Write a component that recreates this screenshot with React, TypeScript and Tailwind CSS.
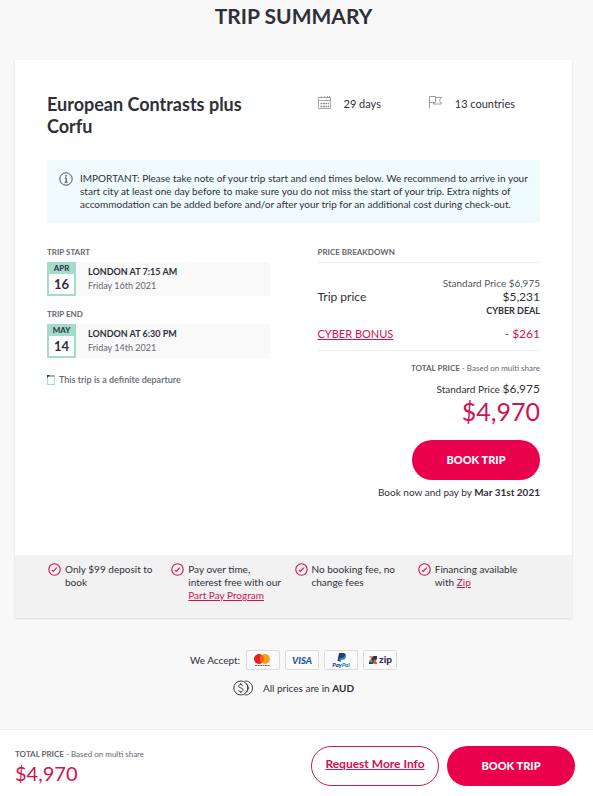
import type { ReactNode } from 'react';

function CalendarIcon() {
  return (
    <svg className="size-[14px] shrink-0 text-[#85858a]" viewBox="0 0 14 14" fill="none" stroke="currentColor" aria-hidden="true">
      <path d="M0.500 1.500h12v11h-12zM0.500 4.500h12M3.500 0v2.500M6.500 0v2M9.500 0v2M11.500 0v2.500" strokeWidth="0.7" />
      <path d="M2.500 7.500h8.500M2.500 10.500h8.500" strokeWidth="1.400" strokeDasharray="1.800 0.700" />
    </svg>
  );
}

function FlagIcon() {
  return (
    <svg className="size-[14px] shrink-0 text-[#85858a]" viewBox="0 0 14 14" fill="none" stroke="currentColor" strokeWidth="0.8" aria-hidden="true">
      <path d="M0.500 12.500V0.500h6v6h-6M6.500 1.500h6l-2 3 2 3.500H4.500V6.500" />
    </svg>
  );
}

function InfoIcon() {
  return (
    <svg className="size-[14px] shrink-0 text-[#3c3c46]" viewBox="0 0 14 14" fill="none" stroke="currentColor" aria-hidden="true">
      <circle cx="7" cy="7" r="6.200" strokeWidth="0.9" />
      <path d="M5.800 6h1.400v4M5.600 10.200h3" strokeWidth="1" />
      <circle cx="7" cy="3.900" r="0.800" fill="currentColor" stroke="none" />
    </svg>
  );
}

function TickIcon() {
  return (
    <svg className="size-[13px] shrink-0 text-[#d0124f]" viewBox="0 0 13 13" fill="none" stroke="currentColor" aria-hidden="true">
      <circle cx="6.500" cy="6.500" r="5.700" strokeWidth="1.100" />
      <path d="M4 7.200l1.200 1.200 3.600-3.800" strokeWidth="1.100" />
    </svg>
  );
}

function CoinsIcon() {
  return (
    <svg className="h-4 w-5 shrink-0 text-[#3c3c46]" viewBox="0 0 20 16" fill="none" stroke="currentColor" aria-hidden="true">
      <circle cx="7.800" cy="8" r="7" strokeWidth="1" />
      <path d="M11.500 1.300c1.200-.4 2.500-.3 3.800.3a7 7 0 0 1 0 12.800c-1.300.6-2.600.7-3.800.3M13.500 3.800c2.300 2.400 2.300 6 0 8.400" strokeWidth="1" />
      <path d="M10 5.800C9.600 4.900 8.800 4.500 7.800 4.500c-1.300 0-2.200.7-2.200 1.700 0 2.300 4.500 1.200 4.500 3.600 0 1.100-1 1.800-2.300 1.800-1.200 0-2.100-.5-2.400-1.500M7.800 3v1.500M7.800 11.600V13" strokeWidth="1" />
    </svg>
  );
}

function DepartureIcon() {
  return (
    <svg className="h-2.5 w-2 shrink-0" viewBox="0 0 8 10" fill="none" aria-hidden="true">
      <rect x="0.500" y="0.500" width="7" height="9" fill="#fff" stroke="#a5dccb" />
      <path d="M0 1h8" stroke="#85bfae" strokeWidth="2" />
      <path d="M0 0h3L0 3z" fill="#26463d" />
    </svg>
  );
}

function DateRow({ label, month, day, title, date }: { label: string; month: string; day: string; title: string; date: string }) {
  return (
    <section>
      <h3 className="text-[8px] leading-4 font-bold text-[#66666e]">{label}</h3>
      <div className="mt-0.5 flex h-[34px] bg-[#f9f9fa]">
        <div className="flex w-[29px] shrink-0 flex-col bg-[#a3dccb] px-0.5 pb-0.5 text-center font-bold text-[#2f2f38]">
          <span className="text-[8px] leading-3">{month}</span>
          <span className="flex-1 bg-white text-[13px] leading-5">{day}</span>
        </div>
        <div className="flex flex-col justify-center pl-3">
          <p className="text-[9px] leading-[14px] font-bold text-[#2f2f38]">{title}</p>
          <p className="text-[9px] leading-[14px] text-[#66666e]">{date}</p>
        </div>
      </div>
    </section>
  );
}

function Perk({ children }: { children: ReactNode }) {
  return (
    <li className="flex items-start gap-1 pr-3 pl-px">
      <TickIcon />
      <p className="text-[10px] leading-[13px]">{children}</p>
    </li>
  );
}

function Badge({ label, children }: { label: string; children: ReactNode }) {
  return (
    <li className="flex h-5 w-[34px] items-center justify-center rounded-xs border border-[#dcdce0] bg-[#fafafb]">
      <svg className="h-[18px] w-8" viewBox="0 0 32 18" role="img" aria-label={label}>
        {children}
      </svg>
    </li>
  );
}

function BookButton() {
  return (
    <button type="button" className="h-10 w-32 rounded-full bg-[#eb004e] text-[11px] font-black text-white">
      BOOK TRIP
    </button>
  );
}

export default function App() {
  return (
    <div className="flex min-h-screen flex-col bg-[#f8f8f8] font-['Lato','Open_Sans',sans-serif] text-[#2f2f38]">
      <main className="flex-1 pr-[21px] pb-8 pl-[15px]">
        <h1 className="pt-1 text-center text-[21px] leading-6 font-bold">TRIP SUMMARY</h1>

        <article className="mt-8 bg-white shadow-[0_1px_2px_rgba(0,0,0,0.12)]">
          <div className="px-8 pt-8 pb-[55px]">
            <header className="grid grid-cols-2 gap-12">
              <h2 className="pt-px text-lg leading-[22px] font-bold">European Contrasts plus Corfu</h2>
              <ul className="grid grid-cols-2 pt-1 text-[11px] leading-4">
                <li className="flex items-start gap-3">
                  <CalendarIcon />
                  <span>29 days</span>
                </li>
                <li className="flex items-start gap-3">
                  <FlagIcon />
                  <span>13 countries</span>
                </li>
              </ul>
            </header>

            <div className="mt-[23px] flex gap-[7px] bg-[#f0fbfd] py-3 pr-2 pl-3">
              <InfoIcon />
              <p className="text-[10px] leading-[13px]">
                IMPORTANT: Please take note of your trip start and end times below. We recommend to arrive in your start city at least one day before to make sure you do not miss the start of your trip. Extra nights of accommodation can be added before and/or after your trip for an additional cost during check-out.
              </p>
            </div>

            <div className="mt-[21px] grid grid-cols-2 gap-12">
              <div>
                <DateRow label="TRIP START" month="APR" day="16" title="LONDON AT 7:15 AM" date="Friday 16th 2021" />
                <div className="mt-2.5">
                  <DateRow label="TRIP END" month="MAY" day="14" title="LONDON AT 6:30 PM" date="Friday 14th 2021" />
                </div>
                <p className="mt-4 flex items-center gap-1 text-[9px] leading-3 font-semibold text-[#66666e]">
                  <DepartureIcon />
                  This trip is a definite departure
                </p>
              </div>

              <section className="text-right">
                <h3 className="border-b border-[#eeeeef] pb-0.5 text-left text-[8px] leading-4 font-bold text-[#66666e]">PRICE BREAKDOWN</h3>
                <dl className="border-b border-[#eeeeef] pt-[13px] pb-2">
                  <div className="flex items-center justify-between">
                    <dt className="text-xs">Trip price</dt>
                    <dd>
                      <p className="text-[10px] leading-[14px] text-[#55555d]">Standard Price $6,975</p>
                      <p className="text-xs leading-[14px]">$5,231</p>
                      <p className="text-[9px] leading-[14px] font-bold">CYBER DEAL</p>
                    </dd>
                  </div>
                  <div className="mt-2 flex items-center justify-between leading-4 text-[#d0124f]">
                    <dt className="text-[11px]">
                      <a href="#cyber-bonus" className="underline">CYBER BONUS</a>
                    </dt>
                    <dd className="text-xs leading-4">- $261</dd>
                  </div>
                </dl>
                <p className="mt-[11px] text-[8px] leading-3 text-[#66666e]">
                  <strong>TOTAL PRICE</strong> - Based on multi share
                </p>
                <p className="mt-[7px] text-[10px] leading-4">
                  Standard Price <span className="text-xs">$6,975</span>
                </p>
                <p className="text-[25px] leading-7 text-[#d0124f]">$4,970</p>
                <div className="mt-[15px]">
                  <BookButton />
                </div>
                <p className="mt-1 text-[10px] leading-4">
                  Book now and pay by <strong>Mar 31st 2021</strong>
                </p>
              </section>
            </div>
          </div>

          <ul className="grid grid-cols-4 bg-[#f2f2f2] px-8 pt-2 pb-4">
            <Perk>Only $99 deposit to book</Perk>
            <Perk>
              Pay over time, interest free with our{' '}
              <a href="#part-pay" className="text-[#d0124f] underline">Part Pay Program</a>
            </Perk>
            <Perk>No booking fee, no change fees</Perk>
            <Perk>
              Financing available with <a href="#zip" className="text-[#d0124f] underline">Zip</a>
            </Perk>
          </ul>
        </article>

        <div className="mt-8 flex items-center justify-center gap-1.5 text-[10px]">
          <span>We Accept:</span>
          <ul className="flex gap-[5px]">
            <Badge label="Mastercard">
              <circle cx="12" cy="8" r="5" fill="#eb1c26" />
              <circle cx="18" cy="8" r="5" fill="#f79e1b" />
              <path d="M15 4a5 5 0 0 1 0 8 5 5 0 0 1 0-8z" fill="#ff5f00" />
              <path d="M8 14.500h15" stroke="#66666e" strokeDasharray="2 0.500" />
            </Badge>
            <Badge label="Visa">
              <text x="16" y="12.500" textAnchor="middle" fontSize="9.500" fontWeight="900" fontStyle="italic" fill="#245b99">VISA</text>
            </Badge>
            <Badge label="PayPal">
              <path d="M14 2h4c2.200 0 3 1.200 2.600 2.800C20.200 6.800 18.800 7.500 17 7.500h-1.500L15 10h-2.500z" fill="#1f3f7c" />
              <path d="M20.500 4.500c1 2.500-.8 4.200-3 4.200h-1.200l-.5 2h-2l.4-2" fill="#1689c9" />
              <text x="16" y="16" textAnchor="middle" fontSize="6" fontWeight="900" fontStyle="italic" fill="#1f3f7c">
                Pay<tspan fill="#1689c9">Pal</tspan>
              </text>
            </Badge>
            <Badge label="Zip">
              <path d="M5 5h3.500l2 2.500L8 9z" fill="#f28c38" />
              <path d="M9.500 5H13v3l-4.500 5H5v-2z" fill="#342b57" />
              <path d="M9.500 9.500l1.500-1.500 2.500 5H9.500z" fill="#e5573f" />
              <path d="M5 9l2.500-.5L9 10l-2 2z" fill="#46a9a0" />
              <text x="15" y="12" fontSize="10" fontWeight="900" fill="#342b57">zip</text>
            </Badge>
          </ul>
        </div>
        <p className="mt-2.5 flex items-center justify-center gap-2.5 text-[10px] leading-4">
          <CoinsIcon />
          <span>
            All prices are in <strong>AUD</strong>
          </span>
        </p>
      </main>

      <footer className="flex justify-between border-t border-[#ececec] bg-white pt-4 pr-[18px] pb-2.5 pl-[15px]">
        <div className="pt-0.5">
          <p className="text-[8px] leading-3 text-[#66666e]">
            <strong>TOTAL PRICE</strong> - Based on multi share
          </p>
          <p className="text-xl leading-[26px] text-[#d0124f]">$4,970</p>
        </div>
        <div className="flex gap-2">
          <button type="button" className="h-10 w-32 rounded-full border border-[#c01c52] bg-white pb-1 text-xs font-bold text-[#d0124f] underline">
            Request More Info
          </button>
          <BookButton />
        </div>
      </footer>
    </div>
  );
}
